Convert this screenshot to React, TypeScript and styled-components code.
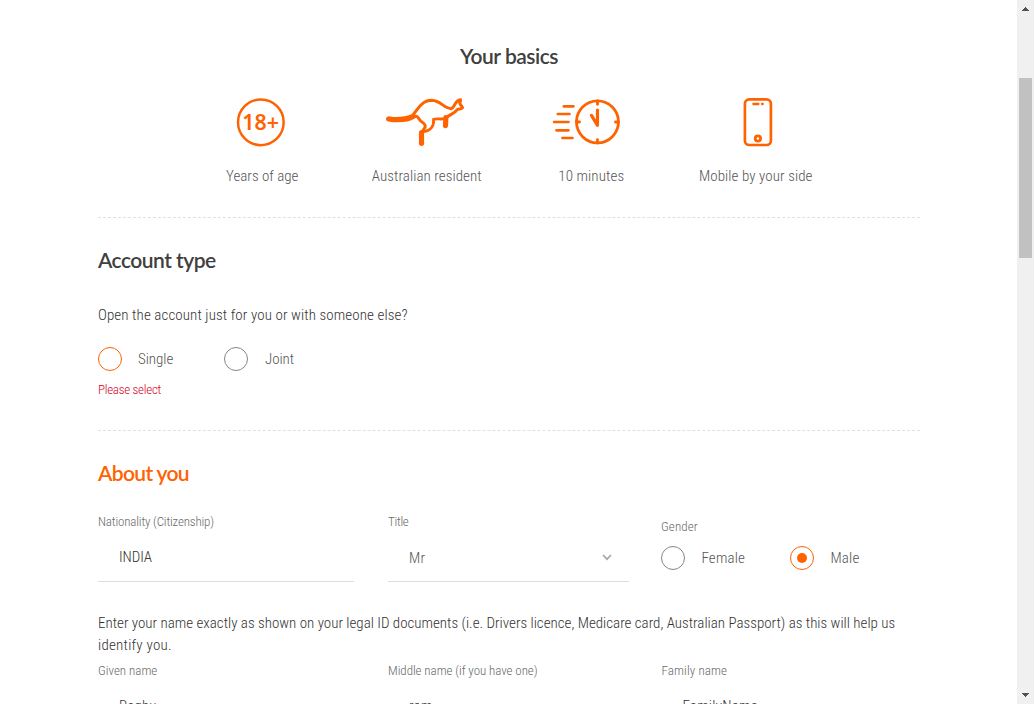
import React from 'react';
import styled, { createGlobalStyle, css } from 'styled-components';

const ORANGE = '#ff6200';

const GlobalStyle = createGlobalStyle`
  * { box-sizing: border-box; }
  body {
    margin: 0;
    background: #fff;
    color: #333;
    font: 300 15px/22px Roboto, "Liberation Sans", sans-serif;
    font-stretch: condensed;
    overflow: hidden;
  }
  h2, p { margin: 0; }
`;

const Viewport = styled.div`
  display: flex;
  height: 704px;
  overflow: hidden;
`;

const Page = styled.main`
  flex: 1;
  min-width: 0;
  padding: 43px 97px 0 98px;
  overflow: hidden;
`;

const Section = styled.section<{ $height?: number; $top?: number }>`
  padding-top: ${p => p.$top ?? 0}px;
  ${p => p.$height && css`
    height: ${p.$height}px;
    border-bottom: 1px dashed #e0e0e0;
  `}
`;

const Heading = styled.h2<{ $center?: boolean; $accent?: boolean; $track?: number }>`
  font: 600 21px/26px Lato, "Liberation Sans", sans-serif;
  letter-spacing: ${p => p.$track ?? -0.52}px;
  color: ${p => (p.$accent ? ORANGE : '#404040')};
  text-align: ${p => (p.$center ? 'center' : 'left')};
`;

const Track = styled.span<{ $by: number }>`
  letter-spacing: ${p => p.$by}px;
`;

const Stats = styled.div`
  display: grid;
  grid-template-columns: repeat(4, 1fr);
  padding: 26px 82px 0;
`;

const Stat = styled.div`
  display: flex;
  flex-direction: column;
  align-items: center;
  gap: 16px;
  color: #555;
  white-space: nowrap;
`;

const Icon = styled.svg`
  width: 84px;
  height: 54px;
  fill: none;
  stroke: ${ORANGE};
  stroke-linecap: round;
  stroke-linejoin: round;
  overflow: visible;
`;

const IconText = styled.text`
  font: 600 64px "Noto Sans", sans-serif;
  fill: ${ORANGE};
  stroke: none;
`;

const Question = styled.p`
  margin-top: 31px;
`;

const Radios = styled.div<{ $top: number }>`
  display: flex;
  margin-top: ${p => p.$top}px;
`;

const RadioLabel = styled.label<{ $width: number; $gap: number }>`
  display: flex;
  align-items: center;
  gap: ${p => p.$gap}px;
  width: ${p => p.$width}px;
  color: #555;
`;

const RadioMark = styled.span<{ $active?: boolean; $dot?: boolean }>`
  display: grid;
  place-items: center;
  width: 24px;
  height: 24px;
  border: 1px solid ${p => (p.$active ? ORANGE : '#858585')};
  border-radius: 50%;
  &::after {
    content: '';
    width: 10px;
    height: 10px;
    border-radius: 50%;
    background: ${p => (p.$dot ? ORANGE : 'transparent')};
  }
`;

const ErrorText = styled.p`
  margin-top: 10px;
  font-size: 13px;
  line-height: 18px;
  color: #d70026;
`;

const FieldRow = styled.div<{ $top: number }>`
  display: grid;
  grid-template-columns: 256px 241px 1fr;
  column-gap: 34px;
  margin-top: ${p => p.$top}px;
`;

const Field = styled.div<{ $shift?: number; $top?: number }>`
  margin-left: ${p => p.$shift ?? 0}px;
  padding-top: ${p => p.$top ?? 0}px;
`;

const FieldLabel = styled.div`
  font-size: 13px;
  line-height: 18px;
  color: #696969;
`;

const Value = styled.div<{ $soft?: boolean }>`
  display: flex;
  align-items: center;
  justify-content: space-between;
  height: 51px;
  padding: ${p => (p.$soft ? 4 : 2)}px 17px 0 21px;
  border-bottom: 1px solid #dedede;
  color: ${p => (p.$soft ? '#555' : '#333')};
`;

const Chevron = styled.svg`
  width: 10px;
  height: 7px;
  margin-top: -2px;
  fill: none;
  stroke: #a8a8a8;
  stroke-width: 1.7;
`;

const Notice = styled.p`
  margin-top: 30px;
`;

const ScrollTrack = styled.div`
  display: flex;
  flex-direction: column;
  align-items: center;
  justify-content: space-between;
  width: 17px;
  padding: 7px 0;
  background: #f0f0f0;
`;

const Arrow = styled.svg`
  width: 7px;
  height: 4px;
  fill: #505050;
`;

const Thumb = styled.div`
  width: 13px;
  height: 180px;
  margin: 67px 0 auto;
  background: #c1c1c1;
`;

interface RadioProps {
  label: string;
  width: number;
  gap?: number;
  active?: boolean;
  dot?: boolean;
  track?: number;
}

function Radio({ label, width, gap = 16, active, dot, track = 0.15 }: RadioProps) {
  return (
    <RadioLabel $width={width} $gap={gap}>
      <RadioMark $active={active} $dot={dot} />
      <Track $by={track}>{label}</Track>
    </RadioLabel>
  );
}

export default function App() {
  return (
    <Viewport>
      <GlobalStyle />
      <Page>
        <Section $height={175}>
          <Heading $center $track={-0.48}>Your basics</Heading>
          <Stats>
            <Stat>
              <Icon viewBox="1 15 252 162">
                <circle cx="123.500" cy="97" r="68.500" strokeWidth="7.500" />
                <IconText x="123" y="119" textAnchor="middle" textLength="110">18+</IconText>
              </Icon>
              <Track $by={0}>Years of age</Track>
            </Stat>
            <Stat>
              <Icon viewBox="44.400 30 252 162">
                <path d="M55 102 C80 106 108 107 130 94" strokeWidth="15" />
                <path
                  d="M55 100 C86 102 112 99 128 91 C142 72 156 46 184 46 C214 47 220 71 244 71 C256 66 252 46 271 44 L269 56 L277 68 C274 73 268 71 262 73 C254 84 243 87 232 95"
                  strokeWidth="9"
                />
                <path d="M227 98 L226 122" strokeWidth="15.500" />
                <path d="M221 101 C210 104 202 99 190 103 C192 121 183 137 160 140" strokeWidth="8.500" />
                <path d="M137 94 C145 92 144 106 157 112 C166 119 168 124 161 132 L154 145" strokeWidth="9" />
                <path d="M154 143 L154 175" strokeWidth="15.500" />
              </Icon>
              <Track $by={0.07}>Australian resident</Track>
            </Stat>
            <Stat>
              <Icon viewBox="27.600 30 252 162" strokeWidth="8.500">
                <circle cx="173" cy="110.500" r="63" />
                <path d="M173 48 V58 M173 164 V174 M110 111 H119 M227 111 H236" />
                <path d="M173 75 V121 L155 91" strokeWidth="9.500" />
                <path d="M72 64 H101 M54 87 H89 M43 111 H86 M50 136 H86 M68 159 H98" strokeWidth="8" />
              </Icon>
              <Track $by={0.1}>10 minutes</Track>
            </Stat>
            <Stat>
              <Icon viewBox="71.800 30 252 162">
                <rect x="164.500" y="43" width="78" height="137" rx="13" strokeWidth="8" />
                <path d="M190 57 H205 M216 57 H218" strokeWidth="7" />
                <circle cx="203.500" cy="160.500" r="8" strokeWidth="8.500" />
              </Icon>
              <Track $by={0.08}>Mobile by your side</Track>
            </Stat>
          </Stats>
        </Section>

        <Section $height={213} $top={29}>
          <Heading>Account type</Heading>
          <Question><Track $by={0.1}>Open the account just for you or with someone else?</Track></Question>
          <Radios $top={21}>
            <Radio label="Single" width={126} active track={-0.05} />
            <Radio label="Joint" width={90} gap={17} track={-0.05} />
          </Radios>
          <ErrorText><Track $by={-0.28}>Please select</Track></ErrorText>
        </Section>

        <Section $top={29}>
          <Heading $accent $track={-0.65}>About you</Heading>
          <FieldRow $top={27}>
            <Field>
              <FieldLabel><Track $by={-0.17}>Nationality (Citizenship)</Track></FieldLabel>
              <Value><Track $by={-0.1}>INDIA</Track></Value>
            </Field>
            <Field>
              <FieldLabel><Track $by={-0.3}>Title</Track></FieldLabel>
              <Value $soft>
                <Track $by={0.3}>Mr</Track>
                <Chevron viewBox="0 0 10 7"><path d="M1 1 L5 5.200 L9 1" /></Chevron>
              </Value>
            </Field>
            <Field $top={5} $shift={-2}>
              <FieldLabel><Track $by={0.12}>Gender</Track></FieldLabel>
              <Radios $top={10}>
                <Radio label="Female" width={129} gap={16.5} track={0.15} />
                <Radio label="Male" width={80} gap={16.5} active dot />
              </Radios>
            </Field>
          </FieldRow>
          <Notice>
            Enter your name exactly as shown on your legal ID documents (i.e. Drivers licence, Medicare card, Australian Passport) as this will help us<br />
            <Track $by={0.25}>identify you.</Track>
          </Notice>
          <FieldRow $top={6}>
            <Field>
              <FieldLabel>Given name</FieldLabel>
              <Value><Track $by={0.1}>Raghu</Track></Value>
            </Field>
            <Field>
              <FieldLabel><Track $by={-0.06}>Middle name (if you have one)</Track></FieldLabel>
              <Value><Track $by={0.3}>ram</Track></Value>
            </Field>
            <Field $shift={-1.5}>
              <FieldLabel><Track $by={0.12}>Family name</Track></FieldLabel>
              <Value><Track $by={0.25}>FamilyName</Track></Value>
            </Field>
          </FieldRow>
        </Section>
      </Page>
      <ScrollTrack>
        <Arrow viewBox="0 0 7 4"><path d="M3 0h1v1h1v1h1v1h1v1H0V3h1V2h1V1h1z" /></Arrow>
        <Thumb />
        <Arrow viewBox="0 0 7 4"><path d="M0 0h7v1H6v1H5v1H4v1H3V3H2V2H1V1H0z" /></Arrow>
      </ScrollTrack>
    </Viewport>
  );
}
